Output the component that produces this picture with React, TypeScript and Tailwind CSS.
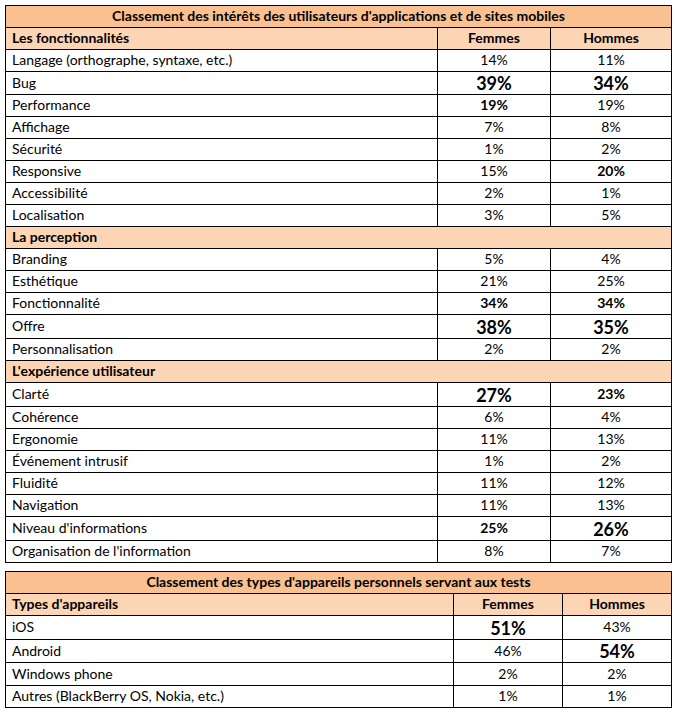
import React from "react";

type V = { v: string; s?: "b" | "B" };
type Row =
  | { kind: "head"; label: string }
  | { kind: "section"; label: string }
  | { kind: "data"; label: string; f: V; m: V; h?: 22 | 23 | 24 };

const t1: Row[] = [
  { kind: "head", label: "Les fonctionnalités" },
  { kind: "data", label: "Langage (orthographe, syntaxe, etc.)", f: { v: "14%" }, m: { v: "11%" } },
  { kind: "data", label: "Bug", f: { v: "39%", s: "B" }, m: { v: "34%", s: "B" }, h: 23 },
  { kind: "data", label: "Performance", f: { v: "19%", s: "b" }, m: { v: "19%" } },
  { kind: "data", label: "Affichage", f: { v: "7%" }, m: { v: "8%" } },
  { kind: "data", label: "Sécurité", f: { v: "1%" }, m: { v: "2%" } },
  { kind: "data", label: "Responsive", f: { v: "15%" }, m: { v: "20%", s: "b" } },
  { kind: "data", label: "Accessibilité", f: { v: "2%" }, m: { v: "1%" } },
  { kind: "data", label: "Localisation", f: { v: "3%" }, m: { v: "5%" } },
  { kind: "section", label: "La perception" },
  { kind: "data", label: "Branding", f: { v: "5%" }, m: { v: "4%" } },
  { kind: "data", label: "Esthétique", f: { v: "21%" }, m: { v: "25%" } },
  { kind: "data", label: "Fonctionnalité", f: { v: "34%", s: "b" }, m: { v: "34%", s: "b" } },
  { kind: "data", label: "Offre", f: { v: "38%", s: "B" }, m: { v: "35%", s: "B" }, h: 24 },
  { kind: "data", label: "Personnalisation", f: { v: "2%" }, m: { v: "2%" } },
  { kind: "section", label: "L'expérience utilisateur" },
  { kind: "data", label: "Clarté", f: { v: "27%", s: "B" }, m: { v: "23%", s: "b" }, h: 24 },
  { kind: "data", label: "Cohérence", f: { v: "6%" }, m: { v: "4%" } },
  { kind: "data", label: "Ergonomie", f: { v: "11%" }, m: { v: "13%" } },
  { kind: "data", label: "Événement intrusif", f: { v: "1%" }, m: { v: "2%" } },
  { kind: "data", label: "Fluidité", f: { v: "11%" }, m: { v: "12%" } },
  { kind: "data", label: "Navigation", f: { v: "11%" }, m: { v: "13%" } },
  { kind: "data", label: "Niveau d'informations", f: { v: "25%", s: "b" }, m: { v: "26%", s: "B" }, h: 24 },
  { kind: "data", label: "Organisation de l'information", f: { v: "8%" }, m: { v: "7%" } },
];

const t2: Row[] = [
  { kind: "head", label: "Types d'appareils" },
  { kind: "data", label: "iOS", f: { v: "51%", s: "B" }, m: { v: "43%" }, h: 24 },
  { kind: "data", label: "Android", f: { v: "46%" }, m: { v: "54%", s: "B" }, h: 23 },
  { kind: "data", label: "Windows phone", f: { v: "2%" }, m: { v: "2%" }, h: 23 },
  { kind: "data", label: "Autres (BlackBerry OS, Nokia, etc.)", f: { v: "1%" }, m: { v: "1%" } },
];

const heightClass = (h?: number) =>
  h === 24 ? "h-[24px]" : h === 23 ? "h-[23px]" : "h-[22px]";

function Val({ v }: { v: V }) {
  const cls =
    v.s === "B"
      ? "font-bold text-[18px] leading-[20px] translate-y-[1px]"
      : v.s === "b"
      ? "font-bold text-[14px] leading-[17px]"
      : "text-[14px] leading-[17px]";
  return <span className={cls}>{v.v}</span>;
}

function Table({
  title,
  rows,
  labelW,
  femW,
}: {
  title: string;
  rows: Row[];
  labelW: string;
  femW: string;
}) {
  return (
    <div className="ml-[5px] w-[667px] border-x border-t border-black">
      <div className="flex h-[22px] items-center justify-center border-b border-black bg-[#fac090] pb-[2px] font-bold text-[14px]">
        {title}
      </div>
      {rows.map((r, i) => {
        if (r.kind === "section") {
          return (
            <div
              key={i}
              className="flex h-[22px] items-center border-b border-black bg-[#fcd5b4] pb-[2px] pl-[6px] font-bold text-[14px]"
            >
              {r.label}
            </div>
          );
        }
        if (r.kind === "head") {
          return (
            <div key={i} className="flex h-[22px] border-b border-black bg-[#fcd5b4] font-bold text-[14px]">
              <div className={`${labelW} flex items-center border-r border-black pb-[2px] pl-[6px]`}>{r.label}</div>
              <div className={`${femW} flex items-center justify-center border-r border-black pb-[2px]`}>Femmes</div>
              <div className="flex flex-1 items-center justify-center pb-[2px]">Hommes</div>
            </div>
          );
        }
        return (
          <div key={i} className={`flex ${heightClass(r.h)} border-b border-black bg-white text-[14px]`}>
            <div className={`${labelW} flex items-center border-r border-black pb-[2px] pl-[6px]`}>{r.label}</div>
            <div className={`${femW} flex items-center justify-center border-r border-black pb-[2px]`}>
              <Val v={r.f} />
            </div>
            <div className="flex flex-1 items-center justify-center pb-[2px]">
              <Val v={r.m} />
            </div>
          </div>
        );
      })}
    </div>
  );
}

export default function App() {
  return (
    <div
      className="w-[677px] h-[713px] bg-white pt-[5px] text-black"
      style={{ fontFamily: "Lato, 'Liberation Sans', sans-serif" }}
    >
      <Table
        title="Classement des intérêts des utilisateurs d'applications et de sites mobiles"
        rows={t1}
        labelW="w-[432px]"
        femW="w-[113px]"
      />
      <div className="h-[8px]" />
      <Table
        title="Classement des types d'appareils personnels servant aux tests"
        rows={t2}
        labelW="w-[448px]"
        femW="w-[109px]"
      />
    </div>
  );
}
